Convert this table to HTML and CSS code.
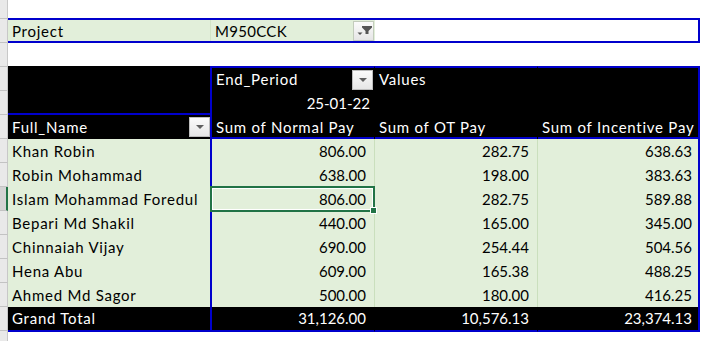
FILE: index.html
```html
<!DOCTYPE html>
<html lang="en">
<head>
    <meta charset="UTF-8">
    <title>Pivot - Pay by employee</title>
    <link rel="stylesheet" href="styles.css">
</head>
<body>
    <div class="sheet">
        <!-- row headers strip -->
        <div class="row-heads">
            <div class="rh rh-first"></div>
            <div class="rh"></div>
            <div class="rh"></div>
            <div class="rh"></div>
            <div class="rh"></div>
            <div class="rh"></div>
            <div class="rh"></div>
            <div class="rh"></div>
            <div class="rh rh-active"></div>
            <div class="rh"></div>
            <div class="rh"></div>
            <div class="rh"></div>
            <div class="rh"></div>
            <div class="rh"></div>
            <div class="rh rh-last"></div>
        </div>

        <div class="cells">
            <div class="spacer-top"></div>

            <!-- report filter -->
            <div class="page-field">
                <div class="pf-label">Project</div>
                <div class="pf-value">
                    <span>M950CCK</span>
                    <span class="dd">
                        <svg width="20" height="20" viewBox="0 0 20 20">
                            <path d="M8 5 H18 V6.5 L14.5 10 V13 H11.5 V10 L8 6.5 Z" fill="#555555"/>
                            <path d="M3.5 11.5 H8.5 L6 14 Z" fill="#555555"/>
                        </svg>
                    </span>
                </div>
            </div>

            <div class="spacer"></div>

            <!-- pivot table -->
            <div class="pivot">
                <div class="c hd a-top"></div>
                <div class="c hd bl bt field"><span>End_Period</span><span class="dd"><i class="tri"></i></span></div>
                <div class="c hd cl bt">Values</div>
                <div class="c hd cl bt br"></div>

                <div class="c hd bl date">25-01-22</div>
                <div class="c hd cl"></div>
                <div class="c hd cl br"></div>

                <div class="c hd field rowfield"><span>Full_Name</span><span class="dd"><i class="tri"></i></span></div>
                <div class="c hd bl bb">Sum of Normal Pay</div>
                <div class="c hd cl bb">Sum of OT Pay</div>
                <div class="c hd cl bb br">Sum of Incentive Pay</div>

                <div class="c bd">Khan Robin</div>
                <div class="c bd bl num">806.00</div>
                <div class="c bd cl num">282.75</div>
                <div class="c bd cl br num nd">638.63</div>

                <div class="c bd">Robin Mohammad</div>
                <div class="c bd bl num">638.00</div>
                <div class="c bd cl num">198.00</div>
                <div class="c bd cl br num nd">383.63</div>

                <div class="c bd">Islam Mohammad Foredul</div>
                <div class="c bd bl num selected">806.00</div>
                <div class="c bd cl num">282.75</div>
                <div class="c bd cl br num nd">589.88</div>

                <div class="c bd">Bepari Md Shakil</div>
                <div class="c bd bl num">440.00</div>
                <div class="c bd cl num">165.00</div>
                <div class="c bd cl br num nd">345.00</div>

                <div class="c bd">Chinnaiah Vijay</div>
                <div class="c bd bl num">690.00</div>
                <div class="c bd cl num">254.44</div>
                <div class="c bd cl br num nd">504.56</div>

                <div class="c bd">Hena Abu</div>
                <div class="c bd bl num">609.00</div>
                <div class="c bd cl num">165.38</div>
                <div class="c bd cl br num nd">488.25</div>

                <div class="c bd">Ahmed Md Sagor</div>
                <div class="c bd bl num">500.00</div>
                <div class="c bd cl num">180.00</div>
                <div class="c bd cl br num nd">416.25</div>

                <div class="c hd tot">Grand Total</div>
                <div class="c hd bl tot num">31,126.00</div>
                <div class="c hd cl tot num">10,576.13</div>
                <div class="c hd cl br tot num nd">23,374.13</div>
            </div>
        </div>
    </div>
</body>
</html>
```

FILE: styles.css
```css
body {
    margin: 0;
    background-color: #ffffff;
    font-family: Lato, "Liberation Sans", sans-serif;
    font-size: 15px;
    color: #000;
}
.sheet {
    display: flex;
    height: 341px;
    overflow: hidden;
}

/* row headers */
.row-heads {
    display: flex;
    flex-direction: column;
    width: 8px;
    flex-shrink: 0;
}
.rh {
    box-sizing: border-box;
    height: 24px;
    background-color: #e9e9e9;
    border-bottom: 1px solid #c3c3c3;
    border-right: 1px solid #c8c8c8;
}
.rh-first {
    height: 19px;
}
.rh-last {
    flex: 1;
    border-bottom: none;
}
.rh-active {
    background-color: #d3d3d3;
    border-right: 2px solid #217346;
}

.cells {
    display: flex;
    flex-direction: column;
}
.spacer-top {
    height: 18px;
}
.spacer {
    height: 23px;
}

/* report filter */
.page-field {
    box-sizing: border-box;
    display: flex;
    width: 692px;
    height: 25px;
    border-top: 2px solid #0000cc;
    border-bottom: 2px solid #0000cc;
    border-right: 2px solid #0000cc;
    line-height: 21px;
}
.pf-label {
    box-sizing: border-box;
    width: 203px;
    padding: 1px 0 0 4px;
    letter-spacing: 0.75px;
    background-color: #e2efda;
    border-right: 1px solid #d2e3c6;
}
.pf-value {
    box-sizing: border-box;
    display: flex;
    justify-content: space-between;
    align-items: center;
    width: 164px;
    padding-left: 4px;
    background-color: #e2efda;
}
.pf-value span:first-child {
    padding-top: 2px;
    letter-spacing: 0.3px;
}

/* dropdown buttons */
.dd {
    box-sizing: border-box;
    display: flex;
    align-items: center;
    justify-content: center;
    width: 21px;
    height: 20px;
    margin-right: 1px;
    background: linear-gradient(#fbfbfb, #e6e6e6);
    border: 1px solid #bdbdbd;
}
.pf-value .dd {
    border-color: #c3ccbc;
}
.dd svg {
    flex-shrink: 0;
}
.tri {
    width: 0;
    height: 0;
    border-left: 4px solid transparent;
    border-right: 4px solid transparent;
    border-top: 4px solid #5f5f5f;
}

/* pivot grid */
.pivot {
    display: grid;
    grid-template-columns: 202px 164px 163px 163px;
    grid-template-rows: 25px 24px 24px repeat(7, 24px) 25px;
    width: 692px;
}
.c {
    box-sizing: border-box;
    padding: 0 4px;
    line-height: 24px;
    letter-spacing: 0.75px;
    white-space: nowrap;
    overflow: hidden;
}
.hd {
    background-color: #000;
    color: #fff;
}
.bd {
    background-color: #e2efda;
}
.num {
    text-align: right;
    padding-right: 8px;
    letter-spacing: 0;
}
.nd {
    padding-right: 6px;
}
.bl {
    border-left: 2px solid #0000cc;
}
.br {
    border-right: 2px solid #0000cc;
}
.bt {
    border-top: 2px solid #0000cc;
    line-height: 23px;
}
.bb {
    box-shadow: inset 0 -2px 0 #0000cc;
}
.cl {
    border-left: 1px solid #cadfbd;
}
.hd.cl {
    border-left-color: #000;
}
.a-top {
    grid-row: span 2;
    border-bottom: 2px solid #0000cc;
}
.field {
    display: flex;
    justify-content: space-between;
    align-items: center;
    padding-right: 0;
}
.rowfield .dd {
    margin-right: 0;
}
.date {
    text-align: right;
    letter-spacing: 0;
}
.tot {
    border-bottom: 2px solid #0000cc;
    line-height: 23px;
}
.selected {
    position: relative;
    overflow: visible;
}
.selected::after {
    content: "";
    position: absolute;
    left: -2px;
    top: -1px;
    right: -1px;
    bottom: -1px;
    border: 2px solid #217346;
    box-shadow: inset 0 0 0 1px #ffffff;
}
.selected::before {
    content: "";
    position: absolute;
    right: -3px;
    bottom: -3px;
    width: 5px;
    height: 5px;
    background-color: #217346;
    border: 1px solid #ffffff;
    z-index: 1;
}
```
